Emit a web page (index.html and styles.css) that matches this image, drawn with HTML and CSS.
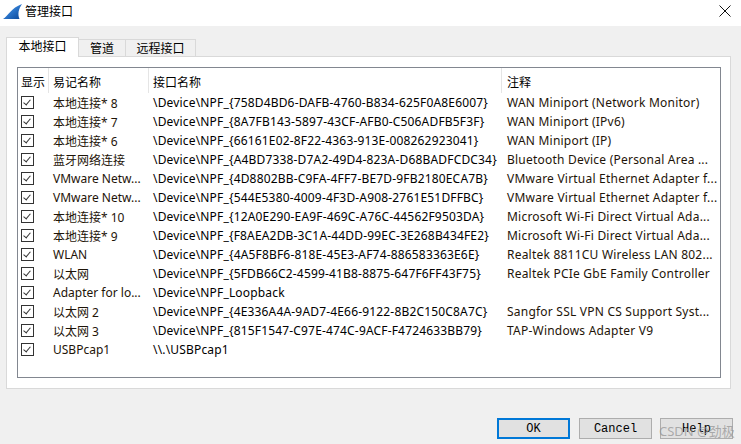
FILE: index.html
```html
<!DOCTYPE html>
<html>
<head>
<meta charset="utf-8">
<link rel="stylesheet" href="styles.css">
</head>
<body>
<div class="window">
  <div class="titlebar">
    <svg class="appicon" width="21" height="17" viewBox="0 0 21 17">
      <defs>
        <linearGradient id="fin" x1="0" y1="0" x2="1" y2="1">
          <stop offset="0" stop-color="#6fb0ee"/>
          <stop offset="0.5" stop-color="#2a74c9"/>
          <stop offset="1" stop-color="#0a4595"/>
        </linearGradient>
      </defs>
      <path d="M1 16 C6 13 9 5 20 1 C16.5 6 15.5 11 17.5 16 Z" fill="url(#fin)"/>
    </svg>
    <span class="title">管理接口</span>
    <svg class="close" width="12" height="12" viewBox="0 0 12 12"><path d="M0.5 0.5 L11.5 11.5 M11.5 0.5 L0.5 11.5" stroke="#111" stroke-width="1"/></svg>
  </div>
  <div class="main">
    <div class="tabs">
      <div class="tab active">本地接口</div>
      <div class="tab t2">管道</div>
      <div class="tab t3">远程接口</div>
    </div>
    <div class="panel">
      <div class="listbox">
        <div class="row head">
          <div class="c1">显示</div>
          <div class="c2">易记名称</div>
          <div class="c3">接口名称</div>
          <div class="c4">注释</div>
        </div>
        <div class="row"><div class="c1"><span class="cb"></span></div><div class="c2">本地连接* 8</div><div class="c3">\Device\NPF_{758D4BD6-DAFB-4760-B834-625F0A8E6007}</div><div class="c4">WAN Miniport (Network Monitor)</div></div>
        <div class="row"><div class="c1"><span class="cb"></span></div><div class="c2">本地连接* 7</div><div class="c3">\Device\NPF_{8A7FB143-5897-43CF-AFB0-C506ADFB5F3F}</div><div class="c4">WAN Miniport (IPv6)</div></div>
        <div class="row"><div class="c1"><span class="cb"></span></div><div class="c2">本地连接* 6</div><div class="c3">\Device\NPF_{66161E02-8F22-4363-913E-008262923041}</div><div class="c4">WAN Miniport (IP)</div></div>
        <div class="row"><div class="c1"><span class="cb"></span></div><div class="c2">蓝牙网络连接</div><div class="c3">\Device\NPF_{A4BD7338-D7A2-49D4-823A-D68BADFCDC34}</div><div class="c4">Bluetooth Device (Personal Area ...</div></div>
        <div class="row"><div class="c1"><span class="cb"></span></div><div class="c2">VMware Netw...</div><div class="c3">\Device\NPF_{4D8802BB-C9FA-4FF7-BE7D-9FB2180ECA7B}</div><div class="c4">VMware Virtual Ethernet Adapter f...</div></div>
        <div class="row"><div class="c1"><span class="cb"></span></div><div class="c2">VMware Netw...</div><div class="c3">\Device\NPF_{544E5380-4009-4F3D-A908-2761E51DFFBC}</div><div class="c4">VMware Virtual Ethernet Adapter f...</div></div>
        <div class="row"><div class="c1"><span class="cb"></span></div><div class="c2">本地连接* 10</div><div class="c3">\Device\NPF_{12A0E290-EA9F-469C-A76C-44562F9503DA}</div><div class="c4">Microsoft Wi-Fi Direct Virtual Ada...</div></div>
        <div class="row"><div class="c1"><span class="cb"></span></div><div class="c2">本地连接* 9</div><div class="c3">\Device\NPF_{F8AEA2DB-3C1A-44DD-99EC-3E268B434FE2}</div><div class="c4">Microsoft Wi-Fi Direct Virtual Ada...</div></div>
        <div class="row"><div class="c1"><span class="cb"></span></div><div class="c2">WLAN</div><div class="c3">\Device\NPF_{4A5F8BF6-818E-45E3-AF74-886583363E6E}</div><div class="c4">Realtek 8811CU Wireless LAN 802...</div></div>
        <div class="row"><div class="c1"><span class="cb"></span></div><div class="c2">以太网</div><div class="c3">\Device\NPF_{5FDB66C2-4599-41B8-8875-647F6FF43F75}</div><div class="c4">Realtek PCIe GbE Family Controller</div></div>
        <div class="row"><div class="c1"><span class="cb"></span></div><div class="c2">Adapter for lo...</div><div class="c3">\Device\NPF_Loopback</div><div class="c4"></div></div>
        <div class="row"><div class="c1"><span class="cb"></span></div><div class="c2">以太网 2</div><div class="c3">\Device\NPF_{4E336A4A-9AD7-4E66-9122-8B2C150C8A7C}</div><div class="c4">Sangfor SSL VPN CS Support Syst...</div></div>
        <div class="row"><div class="c1"><span class="cb"></span></div><div class="c2">以太网 3</div><div class="c3">\Device\NPF_{815F1547-C97E-474C-9ACF-F4724633BB79}</div><div class="c4">TAP-Windows Adapter V9</div></div>
        <div class="row"><div class="c1"><span class="cb"></span></div><div class="c2">USBPcap1</div><div class="c3">\\.\USBPcap1</div><div class="c4"></div></div>
      </div>
    </div>
    <div class="buttons">
      <button class="btn ok">OK</button>
      <button class="btn">Cancel</button>
      <button class="btn help">Help<span class="wm">CSDN @劲极</span></button>
    </div>
  </div>
</div>
</body>
</html>
```

FILE: styles.css
```css
html, body {
  margin: 0;
  padding: 0;
}
body {
  width: 741px;
  height: 444px;
  overflow: hidden;
  background: #f0f0f0;
  font-family: "Noto Sans", "Noto Sans CJK SC", sans-serif;
  font-size: 12px;
  color: #000;
}
.window {
  display: flex;
  flex-direction: column;
  height: 444px;
}
.titlebar {
  height: 26px;
  background: #fff;
  display: flex;
  align-items: center;
  padding-left: 2px;
  box-sizing: border-box;
}
.appicon {
  margin-top: -3px;
}
.title {
  margin-left: 2px;
  margin-top: -4px;
  color: #000;
}
.close {
  margin-left: auto;
  margin-right: 10px;
  margin-top: -5px;
}
.main {
  padding: 11px 8px 0 6px;
  display: flex;
  flex-direction: column;
}
.tabs {
  display: flex;
  align-items: flex-start;
  height: 20px;
}
.tab {
  box-sizing: border-box;
  border: 1px solid #d9d9d9;
  border-bottom: none;
  display: flex;
  align-items: center;
  justify-content: center;
  line-height: 1;
}
.tab.active {
  position: relative;
  z-index: 1;
  width: 73px;
  height: 20px;
  background: #fff;
  padding-bottom: 1px;
}
.tab.t2, .tab.t3 {
  margin-top: 2px;
  height: 17px;
  background: #f0f0f0;
  margin-left: -1px;
  padding-top: 1px;
}
.tab.t2 { width: 48px; }
.tab.t3 { width: 71px; }
.panel {
  margin-top: -1px;
  width: 725px;
  height: 333px;
  box-sizing: border-box;
  border: 1px solid #d9d9d9;
  background: #fff;
  padding: 10px 0 0 10px;
}
.listbox {
  width: 704px;
  height: 311px;
  box-sizing: border-box;
  border: 1px solid #828790;
  background: #fff;
  overflow: hidden;
}
.row {
  display: flex;
  height: 19px;
  align-items: center;
  white-space: nowrap;
}
.row.head {
  height: 25px;
}
.row > div {
  box-sizing: border-box;
  overflow: hidden;
  height: 100%;
  display: flex;
  align-items: center;
}
.c1 { width: 31px; padding-left: 3px; }
.c2 { width: 100px; padding-left: 4px; color: #1e1408; }
.c3 { width: 353px; padding-left: 4px; letter-spacing: 0.17px; }
.c4 { width: 218px; padding-left: 5px; color: #1e1408; letter-spacing: 0.22px; }
.head > div {
  border-right: 1px solid #e5e5e5;
  color: #000;
  padding-top: 2px;
  letter-spacing: 0;
}
.head .c4 { flex: 1; border-right: none; }
.cb {
  width: 13px;
  height: 13px;
  box-sizing: border-box;
  border: 1px solid #333;
  position: relative;
  display: block;
}
.cb::after {
  content: "";
  position: absolute;
  left: 3px;
  top: 1px;
  width: 3px;
  height: 6px;
  border: solid #333;
  border-width: 0 1px 1px 0;
  transform: rotate(40deg);
}
.buttons {
  display: flex;
  justify-content: flex-end;
  gap: 8px;
  margin-top: 29px;
}
.btn {
  width: 73px;
  height: 21px;
  box-sizing: border-box;
  background: #e1e1e1;
  border: 1px solid #adadad;
  font-family: "Liberation Mono", monospace;
  font-size: 12px;
  color: #000;
  padding: 0;
  position: relative;
}
.btn.ok {
  border: 2px solid #0078d7;
  margin-right: 1px;
}
.wm {
  position: absolute;
  left: -2px;
  top: 2px;
  color: rgba(150, 150, 150, 0.75);
  font-family: "Noto Sans", "Noto Sans CJK SC", sans-serif;
  font-size: 13px;
  white-space: nowrap;
}
```
